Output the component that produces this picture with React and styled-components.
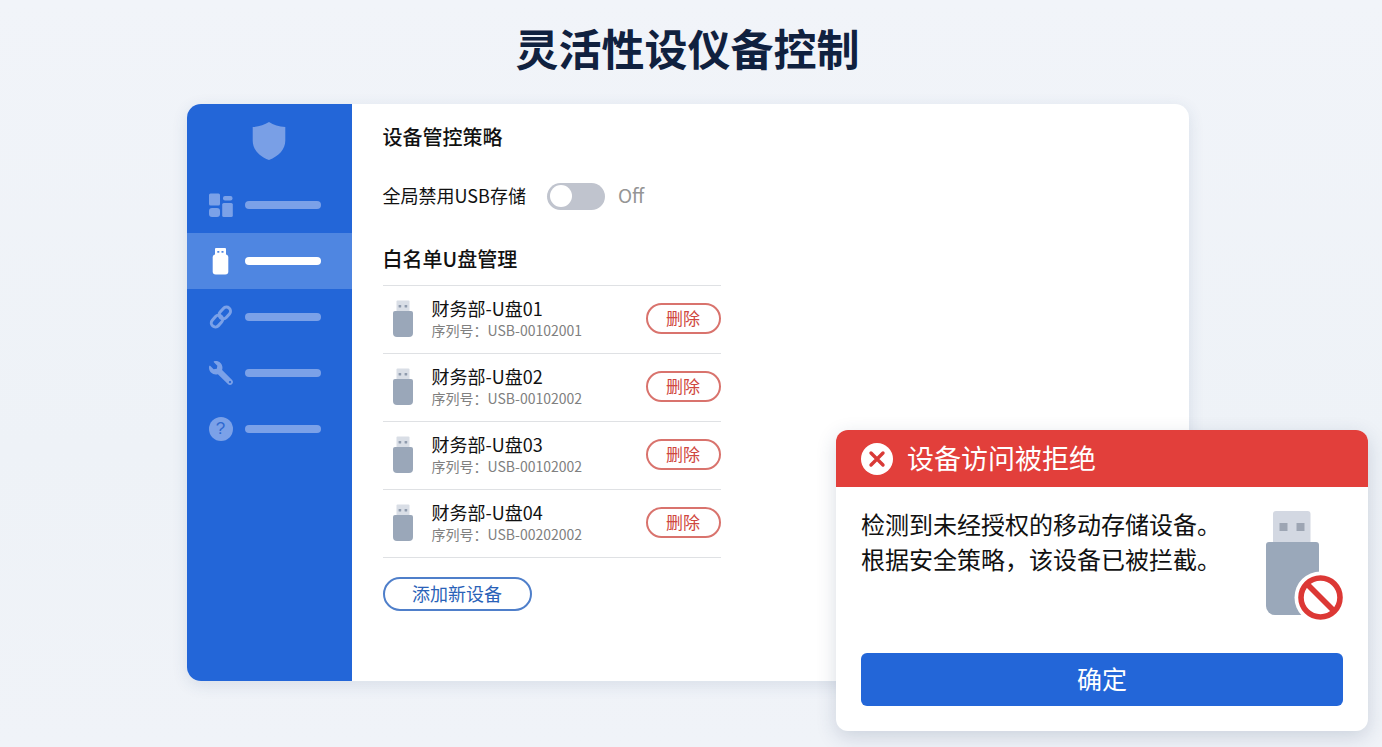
import React, { useState } from "react";
import styled, { createGlobalStyle } from "styled-components";
import { FaWrench } from "react-icons/fa";

const GlobalStyle = createGlobalStyle`
  * {
    box-sizing: border-box;
  }

  body {
    margin: 0;
    background: #f0f4f9;
    color: #111111;
    font-family: "Noto Sans CJK SC", "Noto Sans", sans-serif;
  }

  button {
    font-family: inherit;
    cursor: pointer;
  }
`;

const Page = styled.main`
  position: relative;
  min-height: 100vh;
  padding: 18px 14% 66px 13.5%;
  background: linear-gradient(180deg, #f1f4f9 0%, #eef2f7 60%, #f0f3f8 100%);
`;

const PageTitle = styled.h1`
  margin: 0 0 28px;
  color: #10213f;
  font-size: 43px;
  font-weight: bold;
  line-height: 58px;
  text-align: center;
`;

const Window = styled.div`
  display: flex;
  border-radius: 14px;
  overflow: hidden;
  background: #ffffff;
  box-shadow: 0 4px 16px rgba(40, 70, 120, 0.12);
`;

/* Sidebar */

const Sidebar = styled.aside`
  flex: 0 0 165px;
  display: flex;
  flex-direction: column;
  padding-top: 18px;
  background: #2366d8;
`;

const ShieldIcon = styled.svg`
  align-self: center;
  width: 34px;
  height: 38px;
  margin-bottom: 17px;
  fill: #799fe6;
`;

const Nav = styled.nav`
  display: flex;
  flex-direction: column;
`;

const NavItem = styled.a`
  display: flex;
  align-items: center;
  gap: 12px;
  height: 56px;
  padding: 0 31px 0 22px;
  color: ${({ $active }) => ($active ? "#ffffff" : "#7ba1e8")};
  background: ${({ $active }) => ($active ? "#4f86e1" : "transparent")};
`;

const NavIcon = styled.span`
  flex: 0 0 24px;
  display: flex;
  align-items: center;
  justify-content: center;
`;

const NavBar = styled.span`
  flex: 1;
  height: 8px;
  border-radius: 4px;
  background: currentColor;
`;

const FlippedWrench = styled(FaWrench)`
  width: 24px;
  height: 24px;
  transform: scaleX(-1);
`;

const HelpMark = styled.span`
  width: 24px;
  height: 24px;
  border-radius: 50%;
  background: #7ba1e8;
  color: #2f69d0;
  font-family: "Liberation Sans", sans-serif;
  font-size: 17px;
  line-height: 24px;
  text-align: center;
`;

/* Content */

const Content = styled.section`
  flex: 1;
  display: flex;
  flex-direction: column;
  align-items: flex-start;
  padding: 18px 31px 70px;
`;

const SectionTitle = styled.h2`
  margin: 0;
  font-size: 20px;
  font-weight: 500;
  line-height: 30px;
`;

const SwitchRow = styled.div`
  display: flex;
  align-items: center;
  height: 28px;
  margin: 30px 0 34px;
`;

const SwitchLabel = styled.label`
  margin-right: 21px;
  padding-bottom: 2px;
  font-size: 18px;
`;

const Switch = styled.input`
  appearance: none;
  display: flex;
  align-items: center;
  width: 58px;
  height: 27px;
  margin: 0 13px 0 0;
  padding: 0 3px;
  border-radius: 14px;
  background: #c0c4ce;
  cursor: pointer;

  &::before {
    content: "";
    width: 22px;
    height: 22px;
    border-radius: 50%;
    background: #ffffff;
  }

  &:checked {
    justify-content: flex-end;
    background: #2366d8;
  }
`;

const SwitchState = styled.span`
  padding-bottom: 3px;
  color: #959595;
  font-size: 19px;
`;

const DeviceList = styled.ul`
  width: 100%;
  max-width: 338px;
  margin: 11px 0 19px;
  padding: 0;
  border-top: 1px solid #dfe1e4;
  list-style: none;
`;

const DeviceItem = styled.li`
  display: flex;
  align-items: center;
  padding: 10px 0 13px 10px;
  border-bottom: 1px solid #dfe1e4;
`;

const DeviceText = styled.div`
  flex: 1;
  margin-left: 19px;
`;

const DeviceName = styled.div`
  font-size: 18px;
  line-height: 25px;
`;

const DeviceSerial = styled.div`
  color: #808080;
  font-size: 14px;
  line-height: 19px;
`;

const PillButton = styled.button`
  padding: 0 0 3px;
  background: #ffffff;
`;

const DeleteButton = styled(PillButton)`
  width: 75px;
  height: 31px;
  border: 2px solid #d9736d;
  border-radius: 16px;
  color: #cf4740;
  font-size: 17px;
`;

const AddButton = styled(PillButton)`
  width: 149px;
  height: 34px;
  border: 2px solid #4f7fca;
  border-radius: 17px;
  color: #2a62b8;
  font-size: 18px;
`;

/* Alert dialog, floats over the window */

const Dialog = styled.div`
  position: absolute;
  right: 14px;
  bottom: 16px;
  width: 38.5%;
  min-width: 480px;
  border-radius: 12px;
  overflow: hidden;
  background: #ffffff;
  box-shadow: 0 6px 20px rgba(40, 60, 100, 0.18);
`;

const DialogHeader = styled.header`
  display: flex;
  align-items: center;
  gap: 14px;
  height: 57px;
  padding: 0 25px;
  background: #e23f3b;
`;

const DialogTitle = styled.h2`
  margin: 0;
  padding-bottom: 2px;
  color: #ffffff;
  font-size: 27px;
  font-weight: normal;
  line-height: 40px;
`;

const DialogBody = styled.div`
  display: flex;
  justify-content: space-between;
  padding: 19px 25px 33px;
`;

const DialogText = styled.p`
  margin: 0;
  font-size: 24px;
  line-height: 35px;
`;

const DialogFooter = styled.footer`
  padding: 0 25px 25px;
`;

const ConfirmButton = styled.button`
  width: 100%;
  height: 53px;
  padding: 0 0 4px;
  border: none;
  border-radius: 6px;
  background: #2366d8;
  color: #ffffff;
  font-size: 25px;
`;

const DashboardIcon = () => (
  <svg width="24" height="24" viewBox="0 0 24 24" fill="currentColor">
    <rect x="0" y="0.5" width="11" height="12" rx="1.5" />
    <rect x="14" y="3" width="9.5" height="4.5" rx="2" />
    <rect x="0" y="15" width="11" height="9" rx="3" />
    <rect x="13.2" y="10" width="10.6" height="14" rx="1.5" />
  </svg>
);

const UsbIcon = () => (
  <svg width="24" height="27" viewBox="0 0 24 27" fill="currentColor">
    <path
      fillRule="evenodd"
      d="M7 0h9a1 1 0 0 1 1 1v6H6V1a1 1 0 0 1 1-1zM8.3 3v1.8h2V3zM12.5 3v1.8h2V3z"
    />
    <rect x="3.7" y="6.6" width="15.6" height="20" rx="3" />
  </svg>
);

const LinkIcon = () => (
  <svg
    width="24"
    height="24"
    viewBox="0 0 24 24"
    fill="none"
    stroke="currentColor"
    strokeWidth="3"
  >
    <rect x="9.3" y="3.9" width="13" height="8.2" rx="4.1" transform="rotate(-48 15.8 8)" />
    <rect x="1.5" y="12" width="13" height="8.2" rx="4.1" transform="rotate(-48 8 16.1)" />
  </svg>
);

const DeviceIcon = () => (
  <svg width="20" height="37" viewBox="0 0 20 37">
    <path d="M3.5 1.5a1 1 0 0 1 1-1h11a1 1 0 0 1 1 1V12h-13z" fill="#d9dee6" />
    <rect x="5.6" y="5" width="2.6" height="2.6" rx="0.6" fill="#8f9bad" />
    <rect x="11.6" y="5" width="2.6" height="2.6" rx="0.6" fill="#8f9bad" />
    <path
      d="M2 11h16a2 2 0 0 1 2 2v20a4 4 0 0 1-4 4H4a4 4 0 0 1-4-4V13a2 2 0 0 1 2-2z"
      fill="#9aa7b9"
    />
  </svg>
);

const ErrorIcon = () => (
  <svg width="32" height="32" viewBox="0 0 32 32">
    <circle cx="16" cy="16" r="16" fill="#ffffff" />
    <path
      d="M10 10l12 12M22 10L10 22"
      stroke="#d93a37"
      strokeWidth="3.4"
      strokeLinecap="round"
    />
  </svg>
);

const BlockedUsbIcon = () => (
  <svg width="78" height="114" viewBox="0 -2 78 114">
    <path d="M8 6a3 3 0 0 1 3-3h31.5a3 3 0 0 1 3 3v30H8z" fill="#d3d8e2" />
    <rect x="14.5" y="15" width="8" height="8" fill="#9da5b3" />
    <rect x="31.5" y="15" width="8" height="8" fill="#9da5b3" />
    <path
      d="M4 34h47a3 3 0 0 1 3 3v61a9 9 0 0 1-9 9H10a9 9 0 0 1-9-9V37a3 3 0 0 1 3-3z"
      fill="#9aa8ba"
    />
    <circle cx="55.5" cy="89.5" r="26" fill="#ffffff" />
    <circle cx="55.5" cy="89.5" r="19.5" fill="none" stroke="#dc3835" strokeWidth="5.6" />
    <path d="M42 76l27 27" stroke="#dc3835" strokeWidth="5.6" />
  </svg>
);

const navItems = [
  { id: "dashboard", label: "概览", icon: <DashboardIcon /> },
  { id: "devices", label: "设备", icon: <UsbIcon />, active: true },
  { id: "links", label: "连接", icon: <LinkIcon /> },
  { id: "tools", label: "工具", icon: <FlippedWrench /> },
  { id: "help", label: "帮助", icon: <HelpMark>?</HelpMark> },
];

const devices = [
  { name: "财务部-U盘01", serial: "USB-00102001" },
  { name: "财务部-U盘02", serial: "USB-00102002" },
  { name: "财务部-U盘03", serial: "USB-00102002" },
  { name: "财务部-U盘04", serial: "USB-00202002" },
];

const App = () => {
  const [disabled, setDisabled] = useState(false);

  return (
    <>
      <GlobalStyle />
      <Page lang="zh-CN">
        <PageTitle>灵活性设仪备控制</PageTitle>
        <Window>
          <Sidebar>
            <ShieldIcon viewBox="0 0 34 38">
              <path d="M17 0c4.5 3 10 4.6 16.3 5v13.5c0 9-6.5 15.7-16.3 19.5C7.2 34.2.7 27.5.7 18.5V5C7 4.6 12.5 3 17 0z" />
            </ShieldIcon>
            <Nav>
              {navItems.map((item) => (
                <NavItem
                  key={item.id}
                  href={`#${item.id}`}
                  aria-label={item.label}
                  $active={item.active}
                >
                  <NavIcon>{item.icon}</NavIcon>
                  <NavBar />
                </NavItem>
              ))}
            </Nav>
          </Sidebar>
          <Content>
            <SectionTitle>设备管控策略</SectionTitle>
            <SwitchRow>
              <SwitchLabel htmlFor="usb-switch">全局禁用USB存储</SwitchLabel>
              <Switch
                id="usb-switch"
                type="checkbox"
                role="switch"
                checked={disabled}
                onChange={(e) => setDisabled(e.target.checked)}
              />
              <SwitchState>{disabled ? "On" : "Off"}</SwitchState>
            </SwitchRow>
            <SectionTitle>白名单U盘管理</SectionTitle>
            <DeviceList>
              {devices.map((device) => (
                <DeviceItem key={device.name}>
                  <DeviceIcon />
                  <DeviceText>
                    <DeviceName>{device.name}</DeviceName>
                    <DeviceSerial>序列号：{device.serial}</DeviceSerial>
                  </DeviceText>
                  <DeleteButton type="button">删除</DeleteButton>
                </DeviceItem>
              ))}
            </DeviceList>
            <AddButton type="button">添加新设备</AddButton>
          </Content>
        </Window>
        <Dialog role="alertdialog" aria-labelledby="dialog-title">
          <DialogHeader>
            <ErrorIcon />
            <DialogTitle id="dialog-title">设备访问被拒绝</DialogTitle>
          </DialogHeader>
          <DialogBody>
            <DialogText>
              检测到未经授权的移动存储设备。
              <br />
              根据安全策略，该设备已被拦截。
            </DialogText>
            <BlockedUsbIcon />
          </DialogBody>
          <DialogFooter>
            <ConfirmButton type="button">确定</ConfirmButton>
          </DialogFooter>
        </Dialog>
      </Page>
    </>
  );
};

export default App;
